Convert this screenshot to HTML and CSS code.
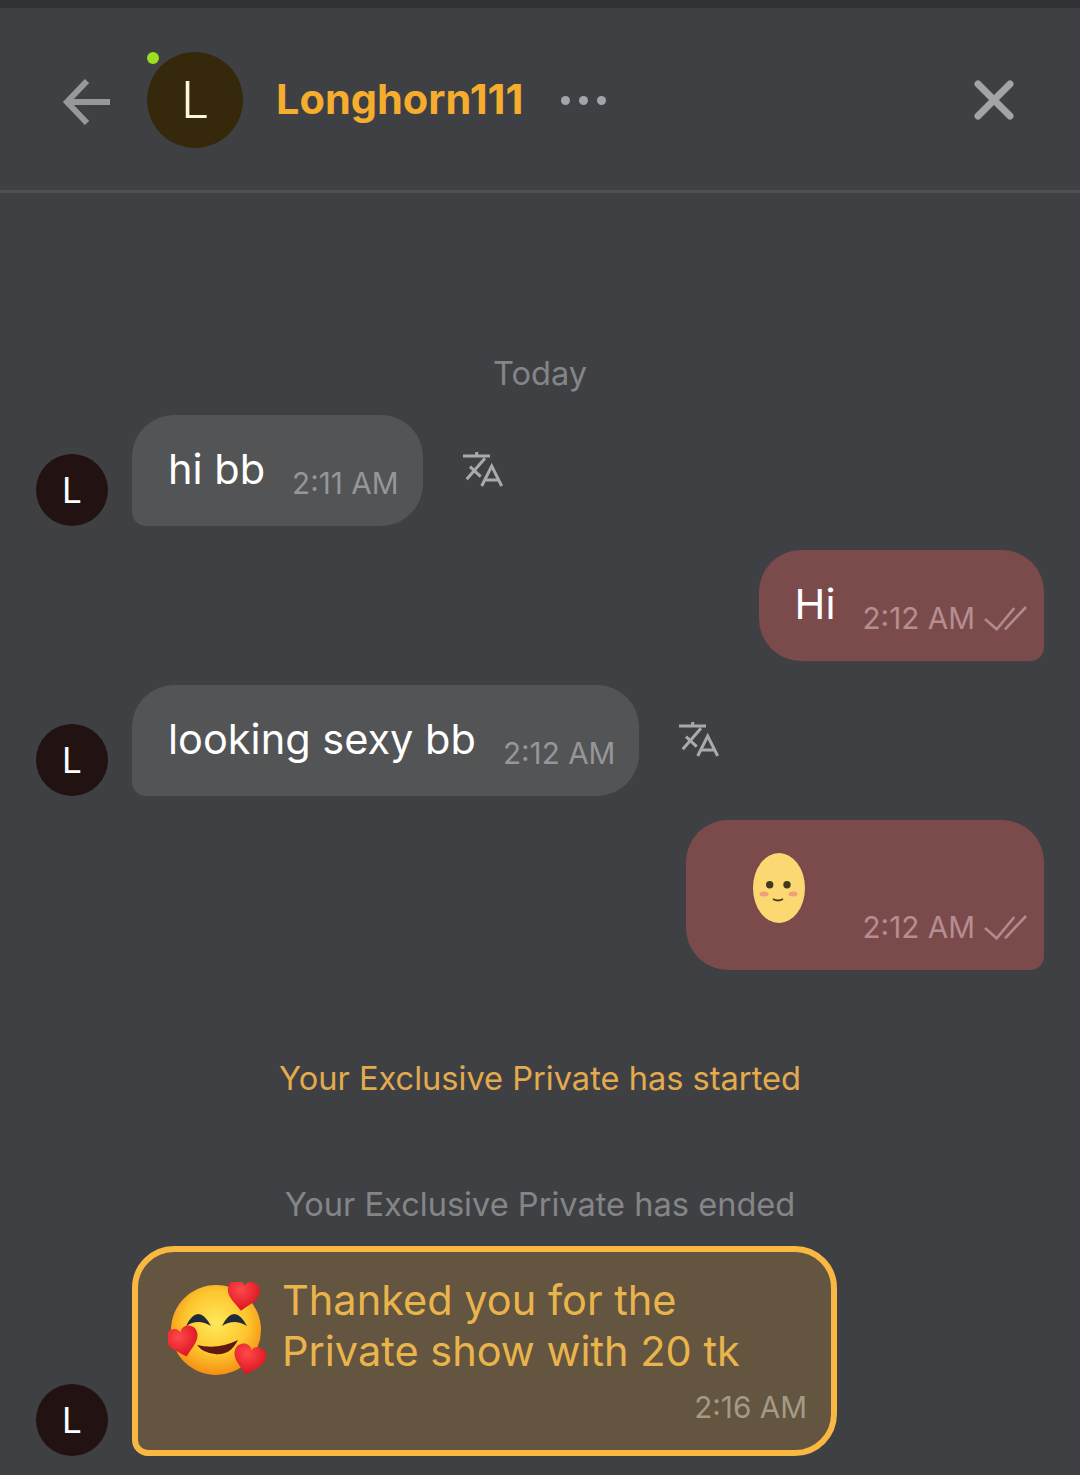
FILE: index.html
```html
<!DOCTYPE html>
<html lang="en">
<head>
	<meta charset="UTF-8">
	<title>Longhorn111</title>
	<link rel="stylesheet" href="styles.css">
</head>
<body>
	<div class="topstrip"></div>
	<div class="chathead">
		<svg class="back" width="50" height="50" viewBox="0 0 50 50"><path d="M48 25H5M25 4L5 25l20 21" fill="none" stroke="#97989c" stroke-width="6"/></svg>
		<div class="headavatar">L<span class="online"></span></div>
		<div class="name">Longhorn111</div>
		<div class="dots"><i></i><i></i><i></i></div>
		<svg class="close" width="40" height="40" viewBox="0 0 40 40"><path d="M4 4l32 32M36 4L4 36" fill="none" stroke="#a3a4a7" stroke-width="7" stroke-linecap="round"/></svg>
	</div>

	<div class="messages">
		<div class="today">Today</div>

		<div class="row">
			<div class="avatar">L</div>
			<div class="bubble in">
				<span class="text">hi bb</span>
				<span class="time">2:11 AM</span>
			</div>
			<svg class="translate" width="40" height="40" viewBox="0 0 40 40"><path d="M0 6h27M13.700 2v4M22 8.300L3.700 29.300M7 16.700l10.700 10M18.700 36l10-20 10 20M22 30h13.300" fill="none" stroke="#a9aaad" stroke-width="3"/></svg>
		</div>

		<div class="row mine">
			<div class="bubble out">
				<span class="text">Hi</span>
				<span class="time">2:12 AM</span>
				<svg class="ticks" width="43" height="26" viewBox="0 0 43 26"><path d="M1 13l11.700 10.300L30.300 2M21 23.300L42 1" fill="none" stroke="#b08a8c" stroke-width="2.600"/></svg>
			</div>
		</div>

		<div class="row">
			<div class="avatar">L</div>
			<div class="bubble in">
				<span class="text">looking sexy bb</span>
				<span class="time">2:12 AM</span>
			</div>
			<svg class="translate" width="40" height="40" viewBox="0 0 40 40"><path d="M0 6h27M13.700 2v4M22 8.300L3.700 29.300M7 16.700l10.700 10M18.700 36l10-20 10 20M22 30h13.300" fill="none" stroke="#a9aaad" stroke-width="3"/></svg>
		</div>

		<div class="row mine">
			<div class="bubble out tall">
				<svg class="egg" width="52" height="70" viewBox="0 0 52 70">
					<ellipse cx="26" cy="35" rx="26" ry="35" fill="#fbd872"/>
					<circle cx="16.700" cy="31.700" r="3.700" fill="#3d3a1e"/>
					<circle cx="34" cy="31.700" r="3.700" fill="#3d3a1e"/>
					<ellipse cx="11" cy="41" rx="4.500" ry="2.500" fill="#ee9f7c"/>
					<ellipse cx="40" cy="41" rx="4.500" ry="2.500" fill="#ee9f7c"/>
					<path d="M20 46q5 3 10 0" fill="none" stroke="#4a4016" stroke-width="1.800"/>
				</svg>
				<div class="meta">
					<span class="time">2:12 AM</span>
					<svg class="ticks" width="43" height="26" viewBox="0 0 43 26"><path d="M1 13l11.700 10.300L30.300 2M21 23.300L42 1" fill="none" stroke="#b08a8c" stroke-width="2.600"/></svg>
				</div>
			</div>
		</div>

		<div class="sys started">Your Exclusive Private has started</div>
		<div class="sys ended">Your Exclusive Private has ended</div>

		<div class="row giftrow">
			<div class="avatar">L</div>
			<div class="gift">
				<div class="giftbody">
					<svg class="hugemoji" width="98" height="94" viewBox="0 0 98 94">
						<defs>
							<radialGradient id="face" cx="50%" cy="42%" r="58%">
								<stop offset="0" stop-color="#ffe95a"/>
								<stop offset="0.6" stop-color="#fdc62e"/>
								<stop offset="1" stop-color="#f58f14"/>
							</radialGradient>
							<radialGradient id="red" cx="40%" cy="30%" r="75%">
								<stop offset="0" stop-color="#ff4a4a"/>
								<stop offset="1" stop-color="#d80f1e"/>
							</radialGradient>
							<path id="heart" d="M0 15C-8 7-16 3-16-6c0-6 5-9 9-9 3.500 0 6 2 7 5 1-3 3.500-5 7-5 4 0 9 3 9 9 0 9-8 13-16 21z" fill="url(#red)"/>
						</defs>
						<circle cx="48" cy="48" r="45" fill="url(#face)"/>
						<path d="M18 44Q30 20 43 44Q30 36 18 44zM54 44Q66 20 79 44Q66 36 54 44z" fill="#1f2a3a"/>
						<path d="M29 63Q50 68 70 58Q62 74 47 72Q35 71 29 63z" fill="#5e1a10"/>
						<use href="#heart" transform="translate(75 14) rotate(8)"/>
						<use href="#heart" transform="translate(15 60) rotate(-14)"/>
						<use href="#heart" transform="translate(81 78) rotate(14)"/>
					</svg>
					<div class="gifttext">Thanked you for the<br>Private show with 20 tk</div>
				</div>
				<span class="time gifttime">2:16 AM</span>
			</div>
		</div>
	</div>
</body>
</html>
```

FILE: styles.css
```css
*{margin: 0;padding: 0;box-sizing: border-box;}
body{width: 1080px;height: 1475px;overflow: hidden;background: #3f4043;font-family: Inter,"Liberation Sans",sans-serif;color: #fff;}
.topstrip{height: 8px;background: #303135;}

.chathead{height: 185px;padding: 2px 66px 0 62px;display: flex;align-items: center;border-bottom: 3px solid #505154;}
.back{flex: none;margin-top: 3px;}
.headavatar{position: relative;width: 96px;height: 96px;margin-left: 35px;border-radius: 50%;background: #35280b;color: #fff5dc;font-size: 50px;line-height: 96px;text-align: center;font-weight: 300;}
.online{position: absolute;top: 0;left: 0;width: 12px;height: 12px;border-radius: 50%;background: #9ae01e;}
.name{margin-left: 33px;margin-bottom: 2px;color: #f6ad2e;font-size: 41.500px;font-weight: 700;}
.dots{margin-left: 38px;display: flex;gap: 9px;}
.dots i{width: 9px;height: 9px;border-radius: 50%;background: #a3a4a9;}
.close{margin-left: auto;}

.messages{padding: 0 36px;}
.today{margin-top: 160px;margin-bottom: 22px;text-align: center;font-size: 32.600px;line-height: 40px;color: #848587;}

.row{display: flex;align-items: flex-end;margin-bottom: 24px;}
.row.mine{justify-content: flex-end;}
.avatar{flex: none;width: 72px;height: 72px;margin-right: 24px;border-radius: 50%;background: #221212;font-size: 35px;line-height: 72px;text-align: center;}

.bubble{display: flex;align-items: flex-start;height: 111px;padding-top: 30px;border-radius: 42px;}
.bubble.in{padding-left: 36px;padding-right: 24px;background: #535456;border-bottom-left-radius: 14px;}
.bubble.out{padding-left: 36px;padding-right: 17px;background: #7b4b4c;border-bottom-right-radius: 14px;}
.bubble.tall{height: 150px;padding-top: 31px;}
.text{font-size: 41.500px;line-height: 48px;margin-right: 27px;white-space: nowrap;}
.time{font-size: 29.700px;line-height: 40px;margin-top: 18px;color: #95969a;white-space: nowrap;}
.out .time{color: #b58e90;}
.ticks{flex: none;margin-top: 26px;margin-left: 9px;}
.meta .time{margin-top: 17px;}
.meta .ticks{margin-top: 25px;}
.translate{flex: none;align-self: flex-start;margin-top: 35px;margin-left: 40px;}

.egg{flex: none;margin-left: 31px;margin-top: 2px;}
.meta{display: flex;align-items: flex-start;margin-left: 58px;margin-top: 39px;}

.sys{text-align: center;font-size: 32.600px;line-height: 40px;}
.started{margin-top: 88px;color: #e3aa4e;}
.ended{margin-top: 86px;margin-bottom: 22px;color: #848587;}

.giftrow{margin-bottom: 0;}
.gift{width: 705px;height: 210px;padding: 23px 24px 22px 30px;display: flex;flex-direction: column;border: 6px solid #f8b841;border-radius: 42px;border-bottom-left-radius: 16px;background: #63553f;}
.giftbody{display: flex;}
.hugemoji{flex: none;margin-top: 7px;margin-right: 16px;}
.gifttext{font-size: 41.500px;line-height: 51px;color: #eab44d;}
.gifttime{align-self: flex-end;margin-top: 10px;color: #a39a87;}
```
